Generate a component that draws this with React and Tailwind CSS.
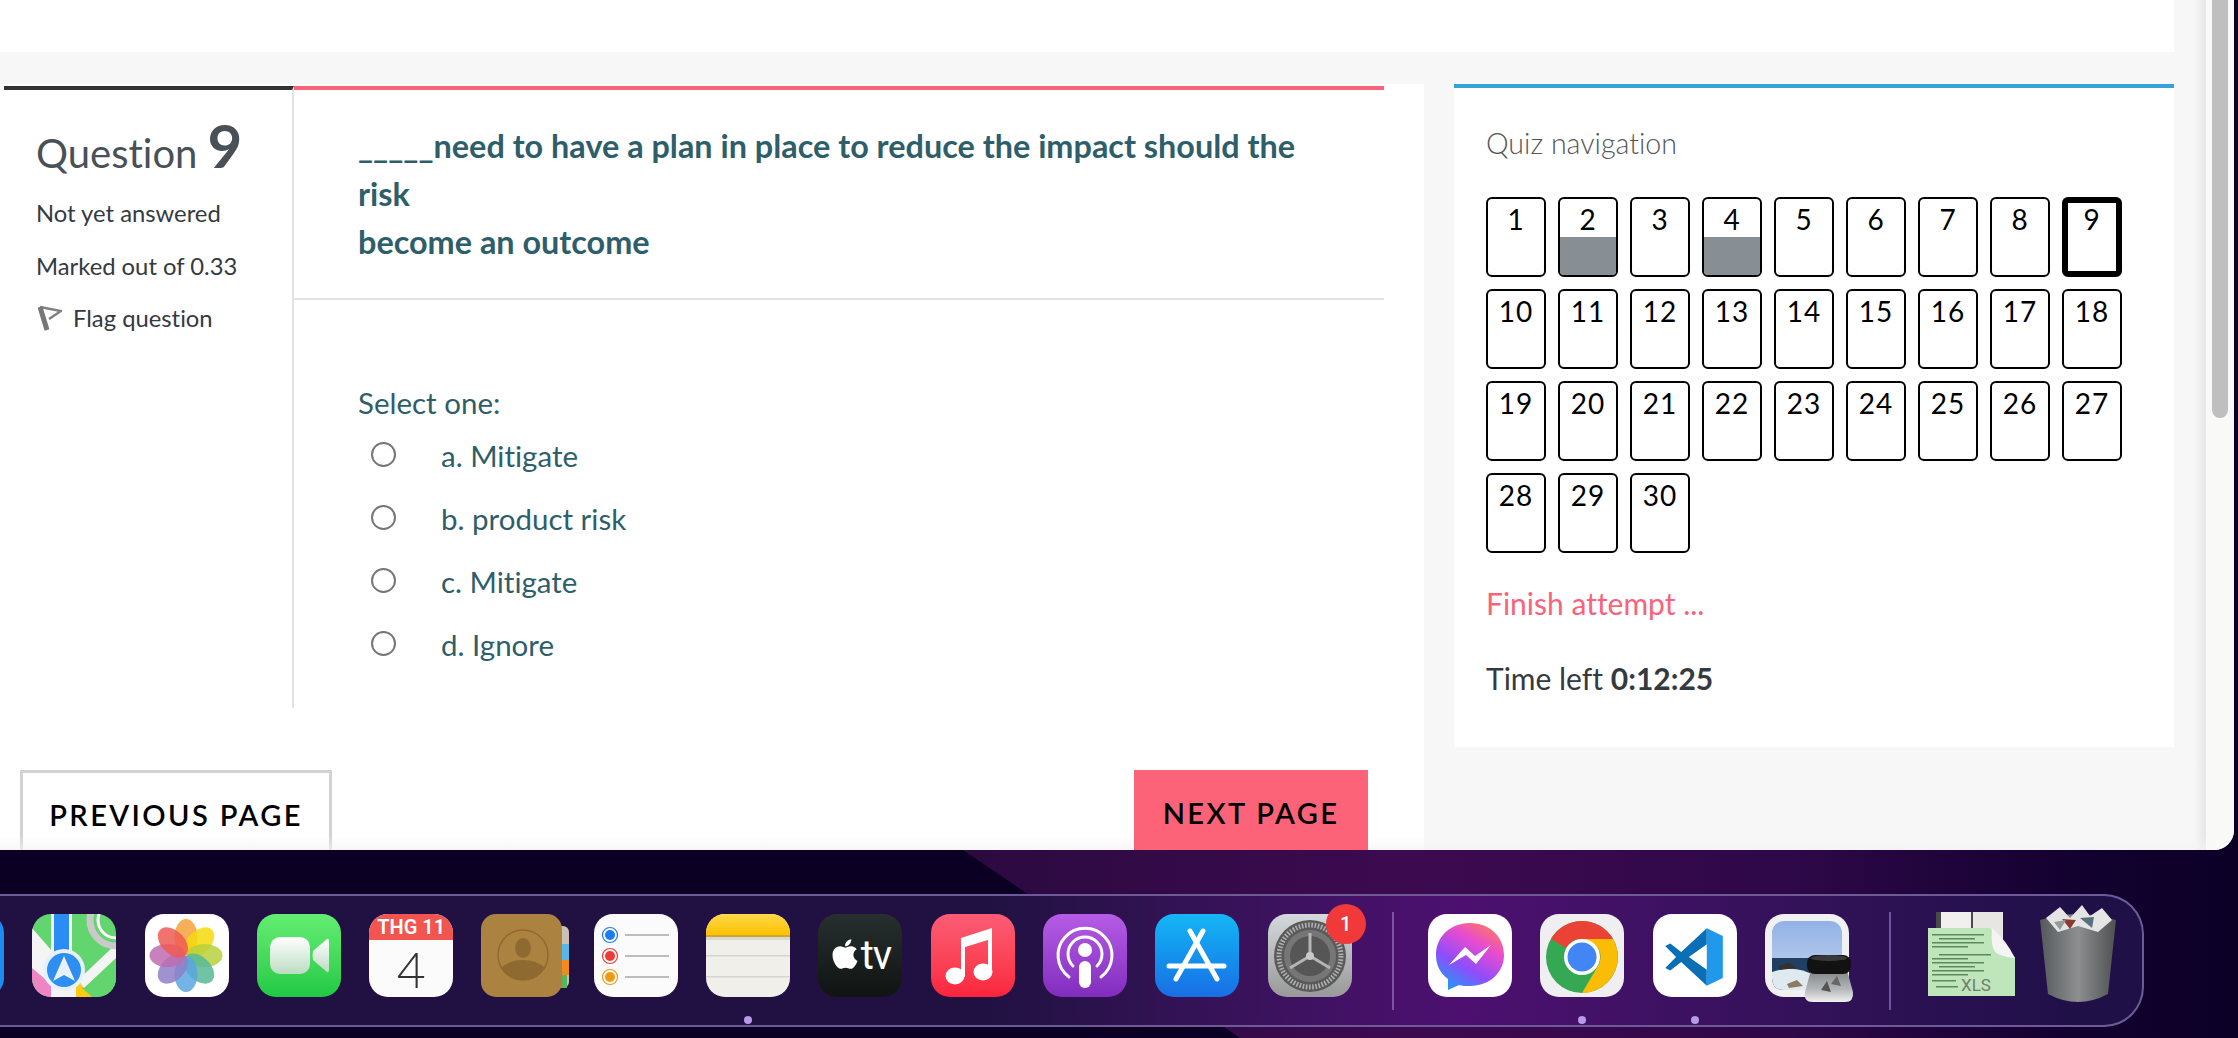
import { FaApple } from 'react-icons/fa';

const Tile = ({ className, children }) => (
  <div className={`w-[84px] h-[83px] rounded-[19px] overflow-hidden ${className}`}>
    <svg viewBox="0 0 84 83" className="w-full h-full block">{children}</svg>
  </div>
);

const MapsIcon = () => (
  <Tile className="bg-[#62d56f]">
    <path d="M0 14 L60 83 H24 L0 60Z" fill="#f4f4f4" />
    <path d="M19 0 H40 V83 H19Z" fill="#f4f4f4" />
    <path d="M22 0 H37 V50 H22Z" fill="#2a8cf5" />
    <path d="M0 54 L19 70 V83 H0Z" fill="#ee86c4" />
    <path d="M44 66 L62 83 H44Z" fill="#ffcc12" />
    <path d="M84 40 L50 74 L60 83 H84Z" fill="#62d56f" />
    <path d="M84 30 L46 66 L52 74 L84 44Z" fill="#f4f4f4" />
    <circle cx="84" cy="6" r="26" fill="none" stroke="#c9c9c9" strokeWidth="7" />
    <circle cx="84" cy="6" r="18" fill="none" stroke="#fff" strokeWidth="3" />
    <circle cx="32" cy="56" r="21" fill="#e7f1fb" />
    <circle cx="32" cy="56" r="17" fill="#2d8ff0" />
    <path d="M32 42 L43 67 L32 61 L21 67Z" fill="#e9f2fb" />
  </Tile>
);

const PhotosIcon = () => (
  <Tile className="bg-white">
    {[
      ['#f7a23b', 0],
      ['#f5d90a', 45],
      ['#b8d13c', 90],
      ['#57b894', 135],
      ['#5aa6e0', 180],
      ['#8f7fc9', 225],
      ['#c06bb0', 270],
      ['#ee5a53', 315],
    ].map(([color, angle]) => (
      <ellipse
        key={angle}
        cx="41"
        cy="23"
        rx="11.5"
        ry="18"
        fill={color}
        fillOpacity="0.85"
        transform={`rotate(${angle} 41 41.5)`}
      />
    ))}
  </Tile>
);

const FaceTimeIcon = () => (
  <Tile className="bg-linear-to-b from-[#62ee72] to-[#1fc945]">
    <defs>
      <linearGradient id="ftBody" x1="0" y1="0" x2="0" y2="1">
        <stop offset="0" stopColor="#ffffff" />
        <stop offset="1" stopColor="#bcdcc2" />
      </linearGradient>
    </defs>
    <rect x="13" y="23" width="40" height="37" rx="10" fill="url(#ftBody)" />
    <path d="M56 37 L70 25 Q72 24 72 27 V56 Q72 59 70 58 L56 46 Q55 41 56 37Z" fill="url(#ftBody)" />
  </Tile>
);

const CalendarIcon = () => (
  <div className="w-[84px] h-[83px] rounded-[19px] overflow-hidden bg-[#fbfbfb] flex flex-col items-center">
    <div className="w-full h-[26px] bg-[#f25450] text-white text-[20px] leading-[27px] font-semibold text-center font-[Roboto,sans-serif]">
      THG 11
    </div>
    <div className="text-[#333] text-[50px] leading-[58px] font-light font-[Lato,sans-serif]">4</div>
  </div>
);

const ContactsIcon = () => (
  <svg viewBox="0 0 88 83" className="w-[88px] h-[83px] block overflow-visible">
    <rect x="66" y="12" width="22" height="62" rx="6" fill="#c9c2b4" />
    <rect x="78" y="30" width="10" height="16" fill="#5ab6e6" />
    <rect x="78" y="46" width="10" height="15" fill="#f28a1e" />
    <rect x="78" y="61" width="8" height="13" fill="#59b55c" />
    <rect x="0" y="0" width="81" height="83" rx="15" fill="#ab8240" />
    <circle cx="42" cy="41" r="25" fill="none" stroke="#8f6a30" strokeWidth="1.5" />
    <ellipse cx="42" cy="34" rx="8" ry="10" fill="#8f6a30" />
    <path d="M20 54 Q28 46 42 46 Q56 46 64 54 Q56 66 42 66 Q28 66 20 54Z" fill="#8f6a30" />
  </svg>
);

const RemindersIcon = () => (
  <Tile className="bg-[#fbfbfb]">
    {[
      ['#1b7cf0', 21],
      ['#ef3b35', 42],
      ['#f09a12', 63],
    ].map(([color, y]) => (
      <g key={y}>
        <circle cx="16" cy={y} r="7.5" fill="none" stroke={color} strokeWidth="1.2" />
        <circle cx="16" cy={y} r="5" fill={color} />
        <rect x="31" y={y - 1} width="44" height="2" fill="#bdbdbd" />
      </g>
    ))}
  </Tile>
);

const NotesIcon = () => (
  <Tile className="bg-[#f0efe9]">
    <defs>
      <linearGradient id="notesTop" x1="0" y1="0" x2="0" y2="1">
        <stop offset="0" stopColor="#ffd84a" />
        <stop offset="1" stopColor="#fdc100" />
      </linearGradient>
    </defs>
    <rect x="0" y="0" width="84" height="21" fill="url(#notesTop)" />
    <rect x="0" y="21" width="84" height="2" fill="#d3a52a" />
    <rect x="0" y="23" width="84" height="3" fill="#d8d8d4" />
    <rect x="0" y="41" width="84" height="1.5" fill="#d6d5cf" />
    <rect x="0" y="62" width="84" height="1.5" fill="#d6d5cf" />
  </Tile>
);

const TvIcon = () => (
  <div className="w-[84px] h-[83px] rounded-[19px] overflow-hidden bg-linear-to-b from-[#27302e] to-[#101413] flex items-center justify-center gap-[1px] text-white">
    <FaApple className="w-[30px] h-[34px] -mt-1" />
    <span className="text-[40px] leading-none font-normal font-[Roboto,sans-serif] tracking-tight">tv</span>
  </div>
);

const MusicIcon = () => (
  <Tile className="bg-linear-to-b from-[#fb5c74] to-[#fa233b]">
    <path d="M30 24 L61 14 V58 H57 V26 L34 33 V63 H30Z" fill="#fff" />
    <ellipse cx="24" cy="62" rx="9.5" ry="8.5" fill="#fff" />
    <ellipse cx="52" cy="58" rx="9.5" ry="8.5" fill="#fff" />
  </Tile>
);

const PodcastsIcon = () => (
  <Tile className="bg-linear-to-b from-[#b65ce6] to-[#822cbe]">
    <path d="M26 63 A27 27 0 1 1 58 63" fill="none" stroke="#fff" strokeWidth="3" strokeLinecap="round" />
    <path d="M30 52 A17 17 0 1 1 54 52" fill="none" stroke="#fff" strokeWidth="3" strokeLinecap="round" />
    <circle cx="42" cy="36" r="7" fill="#fff" />
    <rect x="36" y="47" width="12" height="27" rx="6" fill="#fff" />
  </Tile>
);

const AppStoreIcon = () => (
  <Tile className="bg-linear-to-b from-[#17b6f5] to-[#1a6ee4]">
    <g stroke="#fff" strokeWidth="5" strokeLinecap="round" fill="none">
      <path d="M35 17 L62 65" />
      <path d="M48 17 L21 65" />
      <path d="M14 52 H69" />
    </g>
  </Tile>
);

const SettingsIcon = () => (
  <Tile className="bg-linear-to-b from-[#d4d9dc] to-[#999]">
    <circle cx="42" cy="42" r="36" fill="#5a5a5a" />
    <circle cx="42" cy="42" r="31" fill="none" stroke="#b0b0b0" strokeWidth="5" strokeDasharray="1.6 1.6" />
    <circle cx="42" cy="42" r="26" fill="#767676" />
    <circle cx="42" cy="42" r="20" fill="#565656" />
    <g stroke="#b5b5b5" strokeWidth="3">
      <path d="M42 42 V19" />
      <path d="M42 42 L22 54" />
      <path d="M42 42 L62 54" />
    </g>
    <circle cx="42" cy="42" r="4" fill="#c9c9c9" />
  </Tile>
);

const MessengerIcon = () => (
  <Tile className="bg-white">
    <defs>
      <linearGradient id="msg" x1="0.2" y1="1" x2="0.8" y2="0">
        <stop offset="0" stopColor="#1d9bf5" />
        <stop offset="0.35" stopColor="#8f4dfb" />
        <stop offset="0.7" stopColor="#e84ccf" />
        <stop offset="1" stopColor="#ff7a5c" />
      </linearGradient>
    </defs>
    <path d="M42 9 C22 9 8 23 8 41 C8 51 12 59 20 65 V76 L31 71 C34 72 38 72 42 72 C62 72 76 58 76 41 C76 23 62 9 42 9Z" fill="url(#msg)" />
    <path d="M21 51 L37 33 L47 42 L63 31 L48 50 L38 41Z" fill="#fff" />
  </Tile>
);

const ChromeIcon = () => (
  <Tile className="bg-[#efeff1]">
    <circle cx="42" cy="43" r="36" fill="#34a853" />
    <path d="M42 7 A36 36 0 0 1 73 25 H42 A18 18 0 0 0 26 34 L11 25 A36 36 0 0 1 42 7Z" fill="#ea4335" />
    <path d="M73 25 A36 36 0 0 1 42 79 L58 52 A18 18 0 0 0 58 34 L42 25Z" fill="#fbbc05" />
    <circle cx="42" cy="43" r="18" fill="#fff" />
    <circle cx="42" cy="43" r="14.5" fill="#4285f4" />
  </Tile>
);

const VsCodeIcon = () => (
  <Tile className="bg-white">
    <g transform="translate(9 11) scale(0.64)">
      <path d="M70 5 L30 42 L13 29 L5 33 L22 50 L5 67 L13 71 L30 58 L70 95 L70 70 L42 50 L70 30Z" fill="#0a6fb5" />
      <path d="M70 5 L95 17 V83 L70 95Z" fill="#2099ed" />
    </g>
  </Tile>
);

const PreviewIcon = () => (
  <svg viewBox="0 0 84 83" className="w-[84px] h-[83px] block overflow-visible">
    <defs>
      <linearGradient id="sky" x1="0" y1="0" x2="0" y2="1">
        <stop offset="0" stopColor="#92b2e6" />
        <stop offset="1" stopColor="#c6d6ec" />
      </linearGradient>
      <linearGradient id="loupe" x1="0" y1="0" x2="0" y2="1">
        <stop offset="0" stopColor="#7f8386" />
        <stop offset="0.6" stopColor="#b4b7b9" />
        <stop offset="1" stopColor="#f0f0f0" />
      </linearGradient>
    </defs>
    <rect width="84" height="83" rx="19" fill="#f1f1f1" />
    <rect x="7" y="7" width="70" height="69" rx="12" fill="url(#sky)" />
    <path d="M7 44 H77 V76 H19 Q7 76 7 64Z" fill="#1f3f63" />
    <path d="M7 58 Q30 50 50 62 L60 76 H19 Q7 76 7 64Z" fill="#dfeaf0" />
    <path d="M14 52 L24 49 L32 54 L14 56Z" fill="#36302c" />
    <path d="M22 70 L32 66 L38 72 L24 74Z" fill="#8c7b62" />
    <path d="M46 56 H82 L88 78 Q89 88 80 88 H48 Q38 88 40 78Z" fill="url(#loupe)" />
    <rect x="42" y="41" width="44" height="19" rx="8" fill="#121212" />
    <ellipse cx="64" cy="44" rx="18" ry="3" fill="#3a3a3a" />
    <path d="M56 76 L62 67 L66 78Z" fill="#555" />
    <path d="M66 70 L72 62 L76 72Z" fill="#666" />
  </svg>
);

const XlsIcon = () => (
  <svg viewBox="0 0 87 83" className="w-[87px] h-[83px] block overflow-visible">
    <rect x="8" y="-2" width="66" height="30" fill="#4a4a4a" />
    <rect x="13" y="-2" width="30" height="30" fill="#f1f0ee" />
    <rect x="45" y="-2" width="30" height="30" fill="#e8e6e2" />
    <path d="M0 14 H62 L87 44 V82 H0Z" fill="#bfe6bb" />
    <path d="M64 14 Q62 36 70 40 Q80 44 87 44 Q78 26 64 14Z" fill="#f4f4f4" />
    {[20, 24, 28, 32, 40, 44, 48, 52, 56, 60].map((y, i) => (
      <rect key={y} x={i % 3 === 1 ? 11 : 4} y={y} width={i % 2 ? 36 : 52} height="1.5" fill="#5d8a5d" />
    ))}
    <rect x="4" y="66" width="24" height="1.5" fill="#5d8a5d" />
    <rect x="8" y="72" width="22" height="1.5" fill="#5d8a5d" />
    <text x="33" y="77" fontSize="17" fill="#6f7d6f" fontFamily="Roboto, sans-serif">XLS</text>
  </svg>
);

const TrashIcon = () => (
  <svg viewBox="0 0 76 83" className="w-[76px] h-[83px] block overflow-visible">
    <defs>
      <linearGradient id="bin" x1="0" y1="0" x2="1" y2="0">
        <stop offset="0" stopColor="#56595b" />
        <stop offset="0.5" stopColor="#8c8e90" />
        <stop offset="1" stopColor="#4e5052" />
      </linearGradient>
    </defs>
    <path d="M0 6 Q38 -6 76 6 L68 80 Q38 96 8 80Z" fill="url(#bin)" />
    <path d="M6 4 L20 -7 L30 4 L42 -9 L50 2 L62 -6 L72 6 L58 18 L38 12 L18 18Z" fill="#e4e4e4" />
    <path d="M22 5 L30 15 L36 6Z" fill="#8d3a32" />
    <path d="M40 4 L52 14 L54 3Z" fill="#55707f" />
    <path d="M14 8 L20 16 L26 6Z" fill="#999" />
  </svg>
);

const DockSlot = ({ dot, badge, children }) => (
  <div className="relative w-[84px] h-[83px] shrink-0">
    {children}
    {badge && (
      <div className="absolute -top-[10px] -right-[14px] w-10 h-10 rounded-full bg-[#f1393a] text-white text-[20px] font-medium flex items-center justify-center font-[Roboto,sans-serif]">
        {badge}
      </div>
    )}
    {dot && <div className="absolute left-[38px] top-[102px] w-[8px] h-[8px] rounded-full bg-[#b79bea]" />}
  </div>
);

const questions = Array.from({ length: 30 }, (_, i) => i + 1);
const options = ['a. Mitigate', 'b. product risk', 'c. Mitigate', 'd. Ignore'];

const App = () => {
  return (
    <div className="relative w-full h-screen overflow-hidden bg-[#0b0024] font-[Lato,sans-serif] [font-variant-ligatures:none]">
      {/* wallpaper */}
      <svg className="absolute inset-0 z-0 w-full h-full" viewBox="0 0 2238 1038" preserveAspectRatio="none">
        <defs>
          <linearGradient id="wall" x1="960" y1="0" x2="2238" y2="0" gradientUnits="userSpaceOnUse">
            <stop offset="0" stopColor="#2b0a40" />
            <stop offset="0.35" stopColor="#3d0a50" />
            <stop offset="0.65" stopColor="#2e0848" />
            <stop offset="0.88" stopColor="#12012f" />
            <stop offset="1" stopColor="#0c0026" />
          </linearGradient>
        </defs>
        <polygon points="963,850 1240,1038 2238,1038 2238,850" fill="url(#wall)" />
      </svg>

      <div className="relative z-10 flex flex-col h-full">
        {/* browser window */}
        <div className="flex w-[2234px] h-[850px] shrink-0 rounded-br-[20px] overflow-hidden bg-[#f7f7f7]">
          <div className="relative flex flex-col w-[2206px] shrink-0">
            <div className="w-[2174px] h-[52px] shrink-0 bg-white" />
            <div className="flex items-start mt-8 flex-1">
              {/* question */}
              <div className="w-[1424px] h-full bg-white pt-[2px]">
                <div className="flex ml-1 mr-10 h-[622px]">
                  <div className="w-[290px] shrink-0 border-t-4 border-r-2 border-t-[#333333] border-r-[#e2e2e2] pl-[32px] pt-[38px]">
                    <div className="flex items-end text-[#495057] h-[50px]">
                      <span className="text-[40px] leading-[50px]">Question</span>
                      <span className="ml-[10px] text-[60px] leading-[56px] font-bold -translate-y-[5px]">9</span>
                    </div>
                    <p className="mt-[17px] text-[23.8px] leading-[36px] text-[#343a40]">Not yet answered</p>
                    <p className="mt-[17px] text-[23.8px] leading-[36px] text-[#343a40]">Marked out of 0.33</p>
                    <div className="mt-[16px] flex items-center text-[23.8px] leading-[36px] text-[#343a40]">
                      <svg viewBox="0 0 24 26" className="ml-[2px] w-6 h-[26px] shrink-0">
                        <path d="M2 2 L23 6 L11 14" fill="none" stroke="#808080" strokeWidth="2.5" />
                        <path d="M2 2 L9 25" fill="none" stroke="#777" strokeWidth="5" />
                      </svg>
                      <span className="ml-[11px]">Flag question</span>
                    </div>
                  </div>
                  <div className="flex-1 border-t-4 border-t-[#f8637a] text-[#2f5e6b]">
                    <div className="pl-16 pr-[60px] pt-[32px] pb-[32px] border-b-2 border-[#e2e2e2] text-[32.4px] leading-[48px] font-bold">
                      <p>_____need to have a plan in place to reduce the impact should the risk</p>
                      <p>become an outcome</p>
                    </div>
                    <div className="pl-16">
                      <p className="mt-[83px] text-[29.5px] leading-[40px]">Select one:</p>
                      <div className="mt-[2px] flex flex-col">
                        {options.map((option) => (
                          <label key={option} className="flex items-center h-[63px] text-[29.5px]">
                            <input
                              type="radio"
                              name="answer"
                              className="appearance-none ml-[13px] w-[25px] h-[25px] -mt-1 rounded-full border-2 border-[#767676] bg-white"
                            />
                            <span className="ml-[45px]">{option}</span>
                          </label>
                        ))}
                      </div>
                    </div>
                  </div>
                </div>
                <div className="flex justify-between mt-[62px] pl-5 pr-14 text-black text-[29px] font-semibold tracking-[2.4px]">
                  <button className="w-[312px] h-20 pt-1.5 border-[3px] border-b-0 border-[#d2d2d2] bg-white">PREVIOUS PAGE</button>
                  <button className="relative z-10 w-[234px] h-20 pt-1.5 bg-[#fd6378]">NEXT PAGE</button>
                </div>
              </div>

              {/* quiz navigation */}
              <div className="ml-[30px] w-[720px] h-[663px] bg-white border-t-4 border-[#35a3d5] px-8 pt-[38px]">
                <h3 className="text-[28.6px] leading-[34px] font-light text-[#555]">Quiz navigation</h3>
                <div className="mt-[37px] grid grid-cols-[repeat(9,60px)] gap-3">
                  {questions.map((n) => {
                    const current = n === 9;
                    const answered = n === 2 || n === 4;
                    return (
                      <div
                        key={n}
                        className={`h-20 rounded-md border-black flex flex-col overflow-hidden ${current ? 'border-[6px]' : 'border-2'}`}
                      >
                        <div className={`text-center text-black text-[28px] tracking-[1px] shrink-0 ${current ? 'h-[32px] leading-[32px]' : 'h-[38px] leading-[40px]'}`}>
                          {n}
                        </div>
                        {answered && <div className="flex-1 bg-[#878e94]" />}
                      </div>
                    );
                  })}
                </div>
                <p className="mt-[30px] text-[30px] leading-[40px] text-[#f8637a]">Finish attempt ...</p>
                <p className="mt-[35px] text-[30px] leading-[40px] text-[#343a40]">
                  Time left <b>0:12:25</b>
                </p>
              </div>
            </div>
            <div className="absolute right-0 inset-y-0 w-3 bg-linear-to-r from-transparent to-[#e6e6e6]" />
            <div className="absolute left-0 right-0 bottom-0 h-[14px] bg-linear-to-b from-transparent to-[#f3f3f3]/70" />
          </div>
          {/* scrollbar */}
          <div className="flex-1 pl-[6px] bg-[#f9f9f7]">
            <div className="w-4 h-[418px] rounded-b-lg bg-[#c0bfbf]" />
          </div>
        </div>

        {/* dock */}
        <div className="mt-[44px] w-[2144px] h-[133px] shrink-0 overflow-hidden rounded-r-[40px] border-y-2 border-r-2 border-[#6d5a96] bg-linear-to-r from-[#211142] from-46% via-[#4d1070] via-68% to-[#1f1048] to-97% pt-[18px]">
          <div className="flex gap-[28.3px] -ml-[80px]">
            <DockSlot>
              <div className="w-[84px] h-[83px] rounded-[19px] bg-[#1c8cf0]" />
            </DockSlot>
            <DockSlot><MapsIcon /></DockSlot>
            <DockSlot><PhotosIcon /></DockSlot>
            <DockSlot><FaceTimeIcon /></DockSlot>
            <DockSlot><CalendarIcon /></DockSlot>
            <DockSlot><ContactsIcon /></DockSlot>
            <DockSlot><RemindersIcon /></DockSlot>
            <DockSlot dot><NotesIcon /></DockSlot>
            <DockSlot><TvIcon /></DockSlot>
            <DockSlot><MusicIcon /></DockSlot>
            <DockSlot><PodcastsIcon /></DockSlot>
            <DockSlot><AppStoreIcon /></DockSlot>
            <DockSlot badge="1"><SettingsIcon /></DockSlot>
            <div className="ml-3 mr-[6px] -mt-[2px] w-[2px] h-[98px] shrink-0 bg-[#8d6fc0]/70" />
            <DockSlot><MessengerIcon /></DockSlot>
            <DockSlot dot><ChromeIcon /></DockSlot>
            <DockSlot dot><VsCodeIcon /></DockSlot>
            <DockSlot><PreviewIcon /></DockSlot>
            <div className="ml-3 mr-2 -mt-[2px] w-[2px] h-[98px] shrink-0 bg-[#8d6fc0]/70" />
            <DockSlot><XlsIcon /></DockSlot>
            <DockSlot><TrashIcon /></DockSlot>
          </div>
        </div>
      </div>
    </div>
  );
};

export default App;
